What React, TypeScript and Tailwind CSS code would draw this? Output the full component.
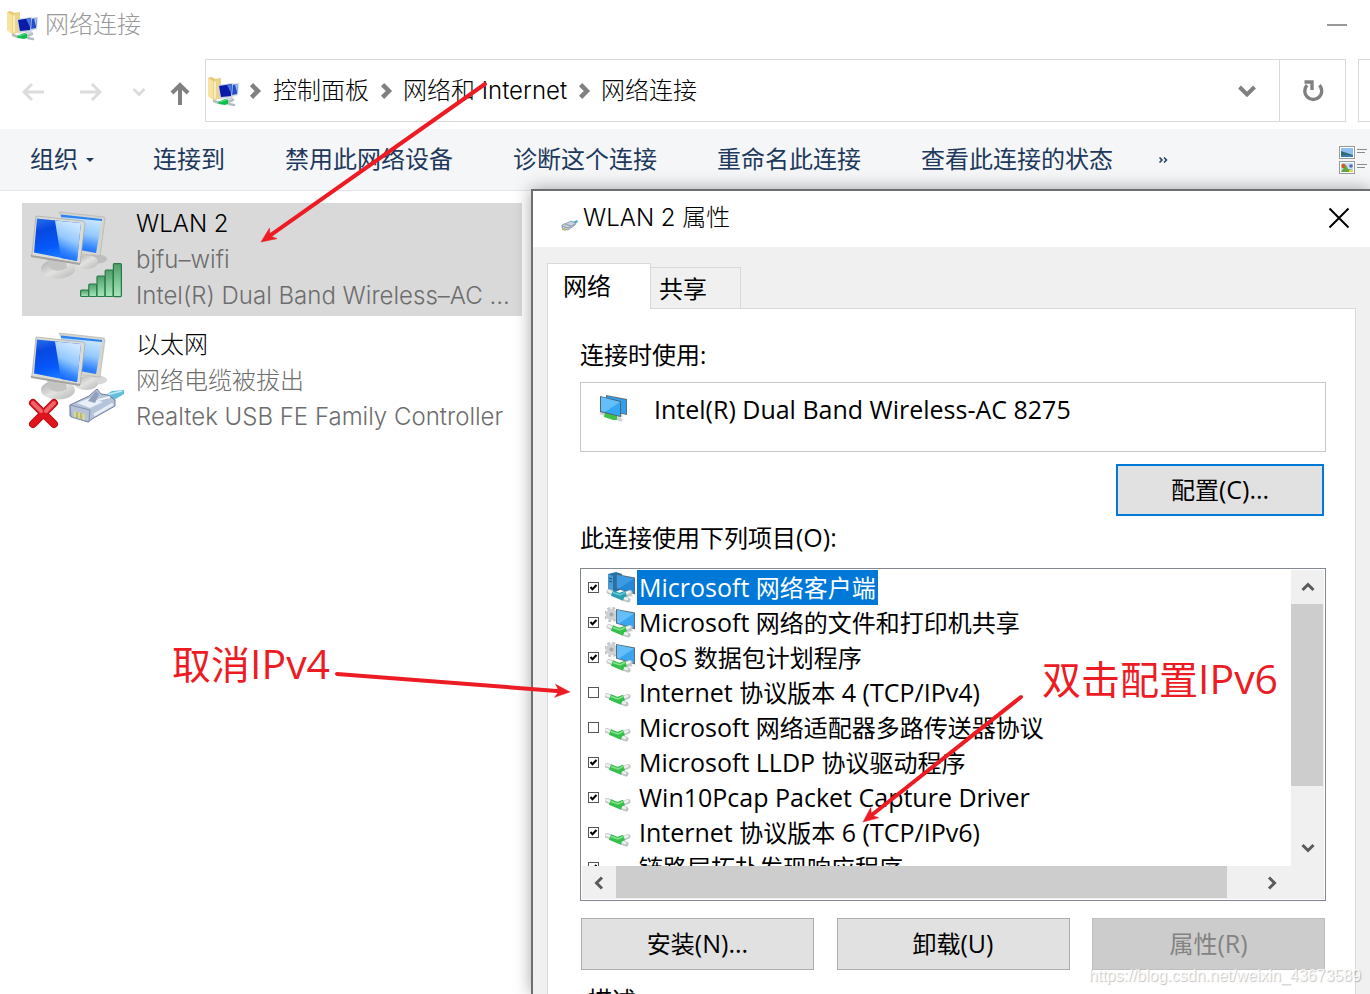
import { useState } from "react";

const LIGHT = "font-['Inter','Noto_Sans_CJK_SC',sans-serif] font-light";
const DIALOG = "font-['Open_Sans','Noto_Sans_CJK_SC',sans-serif]";

const COMMANDS = ["连接到", "禁用此网络设备", "诊断这个连接", "重命名此连接", "查看此连接的状态"];

const CONNECTIONS = [
  { id: "wlan", name: "WLAN 2", status: "bjfu–wifi", device: "Intel(R) Dual Band Wireless–AC ..." },
  { id: "eth", name: "以太网", status: "网络电缆被拔出", device: "Realtek USB FE Family Controller" },
];

const ITEMS = [
  { id: "client", label: "Microsoft 网络客户端", icon: "client", on: true },
  { id: "share", label: "Microsoft 网络的文件和打印机共享", icon: "service", on: true },
  { id: "qos", label: "QoS 数据包计划程序", icon: "service", on: true },
  { id: "ipv4", label: "Internet 协议版本 4 (TCP/IPv4)", icon: "protocol", on: false },
  { id: "mux", label: "Microsoft 网络适配器多路传送器协议", icon: "protocol", on: false },
  { id: "lldp", label: "Microsoft LLDP 协议驱动程序", icon: "protocol", on: true },
  { id: "pcap", label: "Win10Pcap Packet Capture Driver", icon: "protocol", on: true },
  { id: "ipv6", label: "Internet 协议版本 6 (TCP/IPv6)", icon: "protocol", on: true },
  { id: "lltd", label: "链路层拓扑发现响应程序", icon: "protocol", on: true },
];

// Latin runs are set one pixel larger than the Chinese around them
function Mixed({ text }: { text: string }) {
  return (
    <>
      {text.split(/([\u4e00-\u9fff]+)/).map((part, i) =>
        i % 2 ? part : part && <span key={i} className="text-[25px]">{part}</span>
      )}
    </>
  );
}

function FolderNetIcon() {
  return (
    <svg width="32" height="32" viewBox="0 0 32 32" className="shrink-0">
      <path d="M0 3l3-1 3 1 1 1 6-1v20l-7 2-6-4z" fill="#e6c976" />
      <path d="M0 3l5 3v19l-5-4z" fill="#f6e5a2" />
      <path d="M5 6l8-3v20l-8 2z" fill="#ecd48a" />
      <path d="M6 7l2-1v17l-2 1z" fill="#f9edbd" />
      <path d="M23 9l8-1-1 12-6 2z" fill="#ccd6e6" />
      <path d="M24 10l6-1-1 10-5 1z" fill="#234cc8" />
      <path d="M27 9.500l3-.5-1 8z" fill="#9fbdf5" />
      <path d="M10 10l15-2-1 14-12 2z" fill="#c5cede" />
      <path d="M11 11l13-2-1 12-10 1z" fill="#0a1ba8" />
      <path d="M19 10l5-1-1 9z" fill="#4675e4" />
      <path d="M18 23l6-1 2 2-7 1z" fill="#cdd2d6" />
      <path d="M6 26l5 2M21 29l5 1M20 27l5-2" stroke="#b3bfbf" strokeWidth="2.500" strokeLinecap="round" fill="none" />
      <path d="M10 27l7-3 3 1v4l-3 1-6-1z" fill="#0fbd4c" />
      <path d="M12 27l6-2" stroke="#5ee08a" strokeWidth="1" />
    </svg>
  );
}

function ConnectionIcon({ kind }: { kind: string }) {
  return (
    <svg width="108" height="113" viewBox="22 8 108 113" className="shrink-0">
      <defs>
        <linearGradient id={kind + "-deep"} x1="0" y1="0" x2="0.3" y2="1">
          <stop offset="0" stopColor="#2a70ee" />
          <stop offset="0.3" stopColor="#0748e0" />
          <stop offset="0.7" stopColor="#0658fa" />
          <stop offset="1" stopColor="#1a7cff" />
        </linearGradient>
        <linearGradient id={kind + "-glare"} x1="0.4" y1="0" x2="0.1" y2="1">
          <stop offset="0" stopColor="#cbe6ff" />
          <stop offset="0.4" stopColor="#93c8ff" />
          <stop offset="0.7" stopColor="#3385ff" />
          <stop offset="1" stopColor="#0655f5" />
        </linearGradient>
        <linearGradient id={kind + "-stand"} x1="0" y1="0" x2="1" y2="1">
          <stop offset="0" stopColor="#a9a9a7" />
          <stop offset="0.5" stopColor="#e2e2e0" />
          <stop offset="1" stopColor="#b5b5b3" />
        </linearGradient>
        <linearGradient id={kind + "-bar"} x1="0" y1="0" x2="0" y2="1">
          <stop offset="0" stopColor="#4d9f69" />
          <stop offset="1" stopColor="#a9e6bb" />
        </linearGradient>
      </defs>
      <ellipse cx="94" cy="64" rx="13" ry="5" fill="#8c8c8c" opacity="0.35" />
      <ellipse cx="86" cy="67" rx="12" ry="7" fill={`url(#${kind}-stand)`} />
      <path d="M59 17l45 5 1 2-5 37-20-2z" fill="#d4d4cf" stroke="#adada8" strokeWidth="0.6" />
      <path d="M61 19.500l41 4.500-6 34-16-3z" fill={`url(#${kind}-glare)`} />
      <path d="M61 19.500l41 4.500v2l-41-4z" fill="#2f83ee" />
      <ellipse cx="58" cy="74" rx="17" ry="9.500" fill={`url(#${kind}-stand)`} />
      <path d="M47 64l19 4 1 5q-11 6-18-1z" fill="#c4c4c2" />
      <path d="M36 21l47 5 2 2-5 41-49-8 1-2z" fill="#dcdcd7" stroke="#a6a6a1" strokeWidth="0.7" />
      <path d="M31 60l49 8v2l-49-8z" fill="#a3a39f" />
      <path d="M37 23.500l44 4.500-4 38-43-8.500z" fill={`url(#${kind}-deep)`} />
      <path d="M55 25.400l26 2.600-4 38-16-3z" fill={`url(#${kind}-glare)`} />
      {kind === "wlan" ? (
        <g fill={`url(#${kind}-bar)`} stroke="#267a46" strokeWidth="1.2">
          <rect x="80.6" y="95" width="8" height="6.5" rx="1" />
          <rect x="88.8" y="89" width="8" height="12.5" rx="1" />
          <rect x="97" y="81" width="8" height="20.5" rx="1" />
          <rect x="105.2" y="75" width="8" height="26.5" rx="1" />
          <rect x="113.4" y="68.6" width="8" height="33" rx="1" />
        </g>
      ) : (
        <g>
          <path d="M104 80l8-5 12-1v4l-10 6z" fill="#63bddd" />
          <path d="M106 79l16-4" stroke="#c3ebf6" strokeWidth="1.5" />
          <path d="M70 89l19-9 8-7 4 5 7 1 7 5v6l-23 13-4 3-18-6z" fill="#b6c4da" stroke="#6f809b" strokeWidth="1" />
          <path d="M70 89l20 5-1 12-18-5z" fill="#b4c1d7" stroke="#7485a0" strokeWidth="0.8" />
          <path d="M74 95l11 3v6l-11-3z" fill="#d6d793" />
          <path d="M77 96v6M81 97v6" stroke="#8b9158" strokeWidth="0.8" />
          <path d="M77 87l13-5 13 4-13 6z" fill="#e8eff8" />
          <path d="M88 85l8-10 3 3-4 9z" fill="#8fa1bd" />
          <path d="M94 99l19-11" stroke="#e6eef8" strokeWidth="3" />
          <path d="M98 84l12-3" stroke="#eef4fa" strokeWidth="2" />
          <path d="M33 87l21 21M54 87l-21 21" stroke="#b81018" strokeWidth="8" strokeLinecap="round" />
          <path d="M33 87l21 21M54 87l-21 21" stroke="#e0141c" strokeWidth="6" strokeLinecap="round" />
          <path d="M33 87l8 8M54 87l-8 8" stroke="#ee666b" strokeWidth="4" strokeLinecap="round" />
        </g>
      )}
    </svg>
  );
}

function Cable({ color, light }: { color: string; light: string }) {
  return (
    <g fill="none">
      <path d="M2 18.500l4 1.500M19 21l4-1.500M17 25.500l4 1.500" stroke="#bfc4c4" strokeWidth="5" strokeLinecap="round" />
      <path d="M1.500 18l4 1.500M19 20.500l3.500-1.500M17 25l3 1" stroke="#eef0f0" strokeWidth="2.500" strokeLinecap="round" />
      <path d="M5 20l12 5M11 23.500l8-3" stroke={color} strokeWidth="6" />
      <path d="M6 19.500l7 2.500 5-2.500" stroke={light} strokeWidth="1.500" />
    </g>
  );
}

function ItemIcon({ kind }: { kind: string }) {
  if (kind === "protocol") {
    return (
      <svg width="32" height="35" viewBox="0 0 32 35" className="shrink-0">
        <g transform="translate(0 2)">
          <Cable color="#35c04c" light="#86e08f" />
        </g>
      </svg>
    );
  }
  return (
    <svg width="32" height="35" viewBox="0 0 32 35" className="shrink-0">
      {kind === "client" ? (
        <g>
          <path d="M3 4l8-2 6 2v15l-9 4-5-3z" fill="#2272ac" />
          <path d="M3 4l5 2v17l-5-3z" fill="#4b9bd0" />
          <path d="M4 8l3 1M4 11l3 1" stroke="#124f7d" />
        </g>
      ) : (
        <g fill="none">
          <circle cx="6.500" cy="9.500" r="6" stroke="#c3c7ca" strokeWidth="3.500" strokeDasharray="2.800 1.910" />
          <circle cx="6.500" cy="9.500" r="4" stroke="#cfd2d5" strokeWidth="3.500" />
          <circle cx="6.500" cy="9.500" r="2.300" fill="#a6aaad" />
        </g>
      )}
      <path d="M11 4l19 3.500v17l-19-6z" fill="#5b6c78" />
      <path d="M12 5l17 3.500v14.500l-17-5z" fill={kind === "client" ? "#2388d8" : "#3aa5ee"} />
      <path d="M12 5l17 3.500-15 10-2-1z" fill={kind === "client" ? "#3c9be4" : "#64bff9"} />
      <path d="M19 23l6 0 3 3-6 1z" fill="#c5c9cb" />
      <g transform="translate(2 3)">
        {kind === "client" ? <Cable color="#2a9fb0" light="#62cad4" /> : <Cable color="#35c04c" light="#86e08f" />}
      </g>
    </svg>
  );
}

function AdapterIcon() {
  return (
    <svg width="30" height="28" viewBox="0 0 30 28" className="shrink-0">
      <path d="M7 1l21 4v16l-21-4z" fill="#5d6f7b" />
      <path d="M8 2l19 4v14l-19-4z" fill="#2f9fee" />
      <path d="M2 19l6 2M16 23l6-1M17 24l5 2" stroke="#cfd3d3" strokeWidth="3" strokeLinecap="round" />
      <path d="M6 18l12 3v5h-4l-9-3z" fill="#43c04b" />
      <path d="M1 2l21 5v16l-21-5z" fill="#4f6574" />
      <path d="M2 3l19 5v14l-19-5z" fill="#35a6f4" />
      <path d="M2 3l19 5-15 10-4-1z" fill="#62bffa" />
    </svg>
  );
}

function PlugIcon() {
  return (
    <svg width="17" height="12" viewBox="0 0 17 12" className="shrink-0">
      <path d="M12 2l4-2 1 2-4 2z" fill="#2fb1d6" />
      <path d="M1 5l7-3 2-1 5 2-1 2-7 5-6-2z" fill="#c7d0dc" stroke="#77869a" strokeWidth="0.7" />
      <path d="M1 6l6 2 7-4M4 4l6 2" stroke="#8290a4" strokeWidth="0.8" fill="none" />
      <path d="M1 8l4 1v2l-4-1z" fill="#c2bd74" />
    </svg>
  );
}

// Chevron pointing right, rotated through its class for the other directions
function Chevron({ className, size = 14, color = "#5a5a5a", width = 3 }: { className?: string; size?: number; color?: string; width?: number }) {
  return (
    <svg width={size} height={size} viewBox="0 0 14 14" className={className}>
      <path d="M4 1.5L9.5 7L4 12.5" fill="none" stroke={color} strokeWidth={width} />
    </svg>
  );
}

function Arrow({ x1, y1, x2, y2 }: { x1: number; y1: number; x2: number; y2: number }) {
  const len = Math.hypot(x1 - x2, y1 - y2);
  const ux = (x1 - x2) / len;
  const uy = (y1 - y2) / len;
  const at = (along: number, side: number) => `${x2 + ux * along - uy * side},${y2 + uy * along + ux * side}`;
  return (
    <g fill="#ed1c24" stroke="#ed1c24">
      <line x1={x1} y1={y1} x2={x2 + ux * 10} y2={y2 + uy * 10} strokeWidth="4" strokeLinecap="round" />
      <polygon points={[at(0, 0), at(15, 6.5), at(11, 0), at(15, -6.5)].join(" ")} strokeWidth="0.5" />
    </g>
  );
}

function Explorer() {
  const [selected, setSelected] = useState("wlan");
  return (
    <div className={`${LIGHT} text-[24px] leading-9`}>
      <header className="flex h-[59px] items-start justify-between pl-[7px] pr-[23px]">
        <div className="flex items-center gap-[6px] pt-[7px] text-[#999999]">
          <FolderNetIcon />
          <h1>网络连接</h1>
        </div>
        <button aria-label="最小化" className="mt-6 h-[2px] w-5 bg-[#999999]" />
      </header>

      <nav className="flex h-[63px] items-stretch">
        <div className="flex w-[205px] shrink-0 items-center pl-[22px] pt-[2px]">
          <button aria-label="后退" className="mr-9">
            <svg width="22" height="20" viewBox="0 0 22 20" fill="none" stroke="#dcdcdc" strokeWidth="3"><path d="M22 10H2M10 2L2 10l8 8" /></svg>
          </button>
          <button aria-label="前进" className="mr-[30px]">
            <svg width="22" height="20" viewBox="0 0 22 20" fill="none" stroke="#dcdcdc" strokeWidth="3"><path d="M0 10h20M12 2l8 8-8 8" /></svg>
          </button>
          <button aria-label="最近的位置" className="mr-6">
            <Chevron className="rotate-90" color="#dcdcdc" />
          </button>
          <button aria-label="向上" className="mt-1">
            <svg width="20" height="23" viewBox="0 0 20 23" fill="none" stroke="#808080" strokeWidth="4"><path d="M10 23V3M2 11l8-8 8 8" /></svg>
          </button>
        </div>
        <div className="mr-3 flex grow items-stretch border border-[#d9d9d9]">
          <div className="flex grow items-center pl-[2px] pr-[23px]">
            <FolderNetIcon />
            <Chevron className="ml-[7px] mr-[10px]" color="#808080" size={16} width={4} />
            <a href="#panel">控制面板</a>
            <Chevron className="mx-[9px]" color="#808080" size={16} width={4} />
            <a href="#network">网络和 Internet</a>
            <Chevron className="mx-[9px]" color="#808080" size={16} width={4} />
            <a href="#connections">网络连接</a>
            <button aria-label="展开地址" className="ml-auto">
              <svg width="18" height="14" viewBox="0 0 18 14" fill="none" stroke="#808080" strokeWidth="4"><path d="M1.5 3L9 10.500L16.500 3" /></svg>
            </button>
          </div>
          <button aria-label="刷新" className="flex w-[66px] items-center justify-center border-l border-[#d9d9d9]">
            <svg width="22" height="24" viewBox="0 0 22 24" fill="none" stroke="#808080">
              <path d="M5 6.200a8.500 8.500 0 1 0 12.500 0" strokeWidth="3.400" />
              <path d="M2.500 3h7.500v8" strokeWidth="3.400" />
            </svg>
          </button>
        </div>
        <div className="w-3 shrink-0 border-y border-l border-[#d9d9d9]" />
      </nav>

      <div className="mt-[7px] flex h-[62px] items-center whitespace-nowrap border-b border-[#e3e5e7] bg-[#f4f6f8] pl-[30px] font-normal text-[#1e395b]">
        <button className="mr-[59px] flex items-center gap-2">
          组织
          <svg width="8" height="4" viewBox="0 0 8 4"><path d="M0 0h8L4 4z" fill="#1e395b" /></svg>
        </button>
        <div className="flex gap-[60px]">
          {COMMANDS.map((c) => (
            <button key={c}>{c}</button>
          ))}
        </div>
        <button aria-label="更多命令" className="ml-[46px]">
          <svg width="9" height="6" viewBox="0 0 9 6" fill="none" stroke="#1e395b" strokeWidth="1.500"><path d="M0.500 0.500L3 3L0.500 5.500M5 0.500L7.500 3L5 5.500" /></svg>
        </button>
        <button aria-label="更改视图" className="ml-auto mr-[2px]">
          <svg width="29" height="28" viewBox="0 0 29 28">
            <rect x="0.500" y="0.500" width="15" height="12" fill="#fff" stroke="#9a9a9a" />
            <path d="M2 2h12v9H2z" fill="#8fc0f0" />
            <path d="M2 5l12 4v2H2z" fill="#2d6a75" />
            <path d="M2 9h12v2H2z" fill="#3d7ba8" />
            <rect x="0.500" y="15.500" width="15" height="12" fill="#fff" stroke="#9a9a9a" />
            <path d="M2 17h12v9H2z" fill="#bde2f5" />
            <circle cx="4.500" cy="20" r="2.200" fill="#e2531c" />
            <circle cx="12" cy="20" r="1.800" fill="#6a60c8" />
            <path d="M2 26l2-3 3-4 2 4 5 1v2z" fill="#62a63c" />
            <path d="M10 24h4v2h-4z" fill="#e8d84a" />
            <path d="M18 3.500h10M18 6.500h8M18 18.500h10M18 21.500h8" stroke="#8a8a8a" />
          </svg>
        </button>
      </div>

      <main className="flex w-[522px] flex-col gap-2 pl-[22px] pt-3">
        {CONNECTIONS.map((c) => (
          <button
            key={c.id}
            onClick={() => setSelected(c.id)}
            className={`flex items-start text-left ${selected === c.id ? "bg-[#d9d9d9]" : ""}`}
          >
            <ConnectionIcon kind={c.id} />
            <span className="flex flex-col whitespace-nowrap pl-[6px] pt-[3px] text-[#6d6d6d]">
              <span className="text-black">{c.name}</span>
              <span>{c.status}</span>
              <span>{c.device}</span>
            </span>
          </button>
        ))}
      </main>
    </div>
  );
}

function PropertiesDialog() {
  const [tab, setTab] = useState("网络");
  const [active, setActive] = useState("client");
  const [checked, setChecked] = useState<string[]>(ITEMS.filter((i) => i.on).map((i) => i.id));

  const toggle = (id: string) =>
    setChecked((list) => (list.includes(id) ? list.filter((x) => x !== id) : [...list, id]));

  return (
    <section
      role="dialog"
      aria-label="WLAN 2 属性"
      className={`${DIALOG} absolute bottom-0 left-[531px] right-0 top-[189px] flex flex-col overflow-hidden border-l-2 border-t-2 border-[#6d6e70] bg-[#f0f0f0] text-[24px] leading-9 text-black shadow-[0_0_16px_rgba(0,0,0,0.35)]`}
    >
      <header className="flex h-14 shrink-0 items-center justify-between bg-white pb-[2px] pl-7 pr-5">
        <div className="flex items-center gap-[5px]">
          <span className="pt-4"><PlugIcon /></span>
          <h2 className={LIGHT}>WLAN 2 属性</h2>
        </div>
        <button aria-label="关闭">
          <svg width="22" height="22" viewBox="0 0 22 22" stroke="#000" strokeWidth="2"><path d="M1.500 1.500l19 19M20.500 1.500l-19 19" /></svg>
        </button>
      </header>

      <div className="flex grow flex-col px-[14px] pt-4">
        <div role="tablist" className="flex items-end">
          <button role="tab" aria-selected={tab === "网络"} onClick={() => setTab("网络")} className="z-10 -mb-px h-[46px] w-[104px] border border-b-0 border-[#d9d9d9] bg-white pb-[2px] pl-[15px] text-left">
            网络
          </button>
          <button role="tab" aria-selected={tab === "共享"} onClick={() => setTab("共享")} className="-ml-px h-[41px] w-[91px] border border-b-0 border-[#d9d9d9] bg-[#f0f0f0] pl-2 pt-[2px] text-left">
            共享
          </button>
        </div>

        <div className="flex grow flex-col border-x border-t border-[#d9d9d9] bg-white pl-8 pr-[29px] pt-7">
          <p>连接时使用:</p>
          <div className="mt-[9px] flex h-[70px] items-start border border-[#c8c8c8] pl-[18px] pt-2">
            <span className="pt-[3px]"><AdapterIcon /></span>
            <span className="pl-[25px]"><Mixed text="Intel(R) Dual Band Wireless-AC 8275" /></span>
          </div>
          <button className="mr-[2px] mt-3 h-[52px] w-[208px] self-end border-2 border-[#0078d7] bg-[#e1e1e1] pb-[2px]">
            <Mixed text="配置(C)..." />
          </button>

          <p className="mt-[3px]"><Mixed text="此连接使用下列项目(O):" /></p>
          <div className="mt-3 border border-[#828790] p-px">
            <div className="flex">
              <ul className="h-[296px] grow overflow-hidden">
                {ITEMS.map((item) => (
                  <li key={item.id} className="flex h-[35px] items-center pl-[6px]">
                    <span className="relative mr-[6px] flex size-[11px] shrink-0">
                      <input
                        type="checkbox"
                        id={item.id}
                        checked={checked.includes(item.id)}
                        onChange={() => toggle(item.id)}
                        className="size-[11px] appearance-none border border-[#555555] bg-white"
                      />
                      {checked.includes(item.id) && (
                        <svg width="11" height="11" viewBox="0 0 11 11" className="pointer-events-none absolute inset-0">
                          <path d="M2.500 5l2 2.300L8.500 3" fill="none" stroke="#000" strokeWidth="2" />
                        </svg>
                      )}
                    </span>
                    <ItemIcon kind={item.icon} />
                    <label
                      htmlFor={item.id}
                      onMouseEnter={() => setActive(item.id)}
                      className={`whitespace-nowrap px-[2px] leading-[35px] ${active === item.id ? "bg-[#0078d7] text-white" : ""}`}
                    >
                      <Mixed text={item.label} />
                    </label>
                  </li>
                ))}
              </ul>
              <div className="flex w-[33px] shrink-0 flex-col bg-[#f0f0f0]">
                <button aria-label="向上滚动" className="flex h-[34px] items-center justify-center">
                  <Chevron className="-rotate-90" />
                </button>
                <div className="mr-px h-[182px] bg-[#cdcdcd]" />
                <button aria-label="向下滚动" className="mt-auto flex h-9 items-center justify-center">
                  <Chevron className="rotate-90" />
                </button>
              </div>
            </div>
            <div className="flex h-[33px] bg-[#f0f0f0]">
              <button aria-label="向左滚动" className="flex w-[34px] items-center justify-center">
                <Chevron className="rotate-180" />
              </button>
              <div className="mb-px w-[611px] bg-[#cdcdcd]" />
              <button aria-label="向右滚动" className="ml-auto mr-[34px] flex w-9 items-center justify-center">
                <Chevron />
              </button>
            </div>
          </div>

          <div className="mt-[17px] flex justify-between px-px">
            <button className="h-[52px] w-[233px] border border-[#adadad] bg-[#e1e1e1] pb-[2px]"><Mixed text="安装(N)..." /></button>
            <button className="h-[52px] w-[233px] border border-[#adadad] bg-[#e1e1e1] pb-[2px]"><Mixed text="卸载(U)" /></button>
            <button disabled className="h-[52px] w-[233px] border border-[#bfbfbf] bg-[#cccccc] pb-[2px] text-[#838383]"><Mixed text="属性(R)" /></button>
          </div>
          <p className="mt-3 pl-2">描述</p>
        </div>
      </div>
    </section>
  );
}

export default function App() {
  return (
    <div className="relative h-screen overflow-hidden bg-white text-black">
      <Explorer />
      <PropertiesDialog />

      {/* Red notes drawn over both windows */}
      <svg className="pointer-events-none absolute inset-0 z-20 size-full">
        <Arrow x1={485} y1={84} x2={261} y2={242} />
        <Arrow x1={337} y1={674} x2={570} y2={692} />
        <Arrow x1={1021} y1={697} x2={863} y2={822} />
      </svg>
      <p className={`${DIALOG} absolute left-[172px] top-[638px] z-20 text-[39px] leading-[50px] text-[#ed1c24]`}>
        取消<span className="text-[41px]">IPv4</span>
      </p>
      <p className={`${DIALOG} absolute left-[1042px] top-[653px] z-20 text-[39px] leading-[50px] text-[#ed1c24]`}>
        双击配置<span className="text-[41px]">IPv6</span>
      </p>
      <p className="absolute bottom-[6px] right-[9px] z-20 font-['Liberation_Sans',sans-serif] text-[16px] leading-6 text-white/80 [text-shadow:1px_1px_1px_rgba(0,0,0,0.25)]">
        https://blog.csdn.net/weixin_43673589
      </p>
    </div>
  );
}
